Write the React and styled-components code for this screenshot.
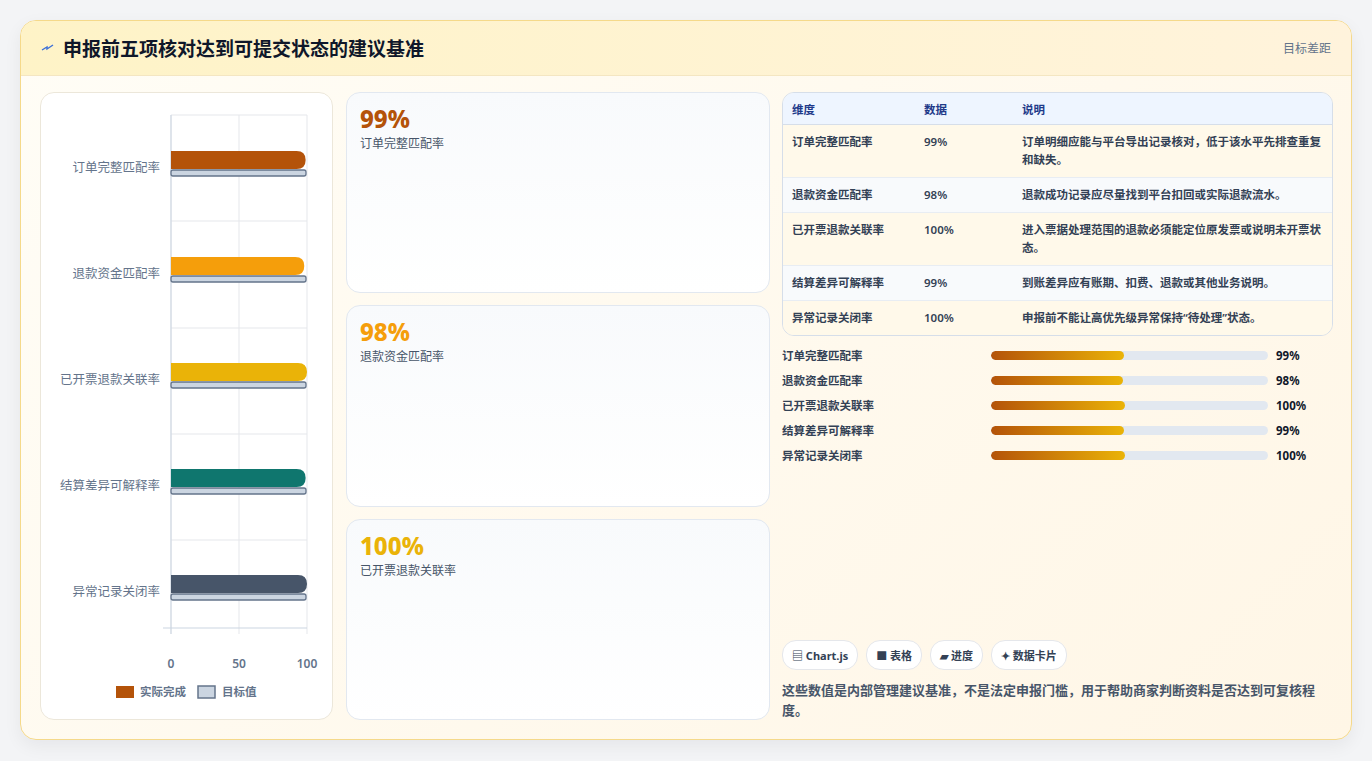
import React from 'react';
import styled, { createGlobalStyle } from 'styled-components';

const GlobalStyle = createGlobalStyle`
  html, body { margin: 0; background: #f3f4f6; }
  body { font-family: "Noto Sans", "Noto Sans CJK SC", sans-serif; }
`;

const metrics = [
  { name: '订单完整匹配率', value: 99, color: '#b45309', note: '订单明细应能与平台导出记录核对，低于该水平先排查重复和缺失。' },
  { name: '退款资金匹配率', value: 98, color: '#f59e0b', note: '退款成功记录应尽量找到平台扣回或实际退款流水。' },
  { name: '已开票退款关联率', value: 100, color: '#eab308', note: '进入票据处理范围的退款必须能定位原发票或说明未开票状态。' },
  { name: '结算差异可解释率', value: 99, color: '#0f766e', note: '到账差异应有账期、扣费、退款或其他业务说明。' },
  { name: '异常记录关闭率', value: 100, color: '#475569', note: '申报前不能让高优先级异常保持“待处理”状态。' },
];

const Page = styled.div`
  padding: 20px 20px 21px;
`;

const Panel = styled.div`
  border: 1px solid #f5d98a;
  border-radius: 16px;
  background: linear-gradient(135deg, #fffdf6, #fff6e6);
  box-shadow: 0 6px 18px rgba(15, 23, 42, 0.06);
  overflow: hidden;
`;

const Header = styled.div`
  height: 54px;
  display: flex;
  align-items: center;
  justify-content: space-between;
  padding: 0 20px;
  background: linear-gradient(90deg, #fef3c7, #fff3dc);
  border-bottom: 1px solid #f4e6c2;
`;

const Title = styled.h2`
  margin: 0;
  display: flex;
  align-items: center;
  gap: 8px;
  font-size: 19px;
  font-weight: 700;
  color: #0f172a;
`;

const Side = styled.span`
  font-size: 12px;
  color: #64748b;
`;

const Body = styled.div`
  display: grid;
  grid-template-columns: 293px 423px 1fr;
  gap: 14px;
  padding: 16px 18px 19px 19px;
  height: 628px;
`;

const Card = styled.div`
  background: #fff;
  border: 1px solid #ece7da;
  border-radius: 14px;
  overflow: hidden;
`;

const Stack = styled.div`
  display: grid;
  grid-template-rows: repeat(3, 1fr);
  gap: 12px;
  margin-left: -1px;
`;

const Stat = styled.div`
  border: 1px solid #e2e8f0;
  border-radius: 14px;
  background: linear-gradient(180deg, #f8fafc, #ffffff);
  padding: 12px 13px;
`;

const StatValue = styled.div`
  font-size: 24px;
  font-weight: 800;
  line-height: 28px;
  color: ${(p) => p.color};
`;

const StatLabel = styled.div`
  font-size: 12px;
  color: #475569;
  margin-top: 1px;
`;

const Right = styled.div`
  display: flex;
  flex-direction: column;
  margin-left: -2px;
`;

const Table = styled.table`
  width: 100%;
  border-collapse: separate;
  border-spacing: 0;
  border: 1px solid #d6dee9;
  border-radius: 12px;
  overflow: hidden;
  font-size: 11.5px;
  color: #334155;
  th {
    background: #eef5ff;
    color: #1e3a8a;
    text-align: left;
    font-weight: 700;
    height: 31px;
    padding: 0 9px;
    border-bottom: 1px solid #d6dee9;
  }
  td {
    padding: 8px 9px;
    vertical-align: top;
    line-height: 18px;
    font-weight: 600;
    border-top: 1px solid #e8edf3;
  }
  tbody tr:first-child td { border-top: none; }
  tbody tr:nth-child(odd) td { background: #fff9ea; }
  tbody tr:nth-child(even) td { background: #f8fafc; }
`;

const Progress = styled.div`
  display: flex;
  flex-direction: column;
  gap: 7px;
  margin-top: 10px;
`;

const ProgressRow = styled.div`
  display: grid;
  grid-template-columns: 201px 277px 1fr;
  align-items: center;
  gap: 0 8px;
  font-size: 11.5px;
  font-weight: 600;
  color: #334155;
  height: 18px;
  b { color: #0f172a; font-weight: 700; }
`;

const Track = styled.div`
  height: 9px;
  border-radius: 5px;
  background: #e2e8f0;
  overflow: hidden;
`;

const Fill = styled.div`
  height: 100%;
  border-radius: 5px;
  background: linear-gradient(90deg, #b45309, #eab308);
`;

const Chips = styled.div`
  margin-top: auto;
  display: flex;
  gap: 8px;
`;

const Chip = styled.span`
  height: 28px;
  padding: 0 9px;
  display: inline-flex;
  align-items: center;
  gap: 3px;
  border: 1px solid #e5e7eb;
  border-radius: 14px;
  background: #fff;
  font-size: 11px;
  font-weight: 700;
  color: #334155;
`;

const Note = styled.p`
  margin: 10px 0 0;
  font-size: 13px;
  line-height: 20px;
  font-weight: 600;
  color: #475569;
  padding-right: 12px;
`;

const Chart = () => {
  const x0 = 130;
  const w = 136;
  const centers = [74, 180, 286, 392, 498];
  return (
    <svg width="292" height="626" fontFamily='"Noto Sans", "Noto Sans CJK SC", sans-serif'>
      {[0, 50, 100].map((t) => (
        <line key={t} x1={x0 + (w * t) / 100} x2={x0 + (w * t) / 100} y1="22" y2="541" stroke="#e5e7eb" />
      ))}
      {[22, 128, 235, 341, 447].map((y) => (
        <line key={y} x1={x0} x2={x0 + w} y1={y} y2={y} stroke="#e5e7eb" />
      ))}
      <line x1={x0} x2={x0} y1="22" y2="541" stroke="#cbd5e1" />
      <line x1={x0 - 8} x2={x0 + w} y1="535" y2="535" stroke="#cbd5e1" />
      {metrics.map((m, i) => {
        const c = centers[i];
        const bw = (w * m.value) / 100;
        return (
          <g key={m.name}>
            <text x="119" y={c + 5} textAnchor="end" fontSize="12.5" fill="#64748b">{m.name}</text>
            <path d={`M${x0} ${c - 16} H${x0 + bw - 9} Q${x0 + bw} ${c - 16} ${x0 + bw} ${c - 7} Q${x0 + bw} ${c + 2} ${x0 + bw - 9} ${c + 2} H${x0} Z`} fill={m.color} />
            <rect x={x0} y={c + 3} width={w - 1} height="6" rx="2" fill="#cbd5e1" stroke="#64748b" strokeWidth="1.3" />
          </g>
        );
      })}
      {[0, 50, 100].map((t) => (
        <text key={t} x={x0 + (w * t) / 100} y="575" textAnchor="middle" fontSize="12" fontWeight="600" fill="#64748b">{t}</text>
      ))}
      <rect x="75" y="593" width="18" height="12" fill="#b45309" />
      <text x="99" y="603" fontSize="11.5" fontWeight="600" fill="#64748b">实际完成</text>
      <rect x="157" y="593" width="17" height="12" fill="#cbd5e1" stroke="#64748b" strokeWidth="1.5" />
      <text x="181" y="603" fontSize="11.5" fontWeight="600" fill="#64748b">目标值</text>
    </svg>
  );
};

export default function App() {
  return (
    <Page>
      <GlobalStyle />
      <Panel>
        <Header>
          <Title>
            <svg width="14" height="10" viewBox="0 0 14 10">
              <path d="M1 7 L6 4 L6 6 L12 2" fill="none" stroke="#3b6fd8" strokeWidth="1.4" />
            </svg>
            申报前五项核对达到可提交状态的建议基准
          </Title>
          <Side>目标差距</Side>
        </Header>
        <Body>
          <Card><Chart /></Card>
          <Stack>
            {metrics.slice(0, 3).map((m) => (
              <Stat key={m.name}>
                <StatValue color={m.color}>{m.value}%</StatValue>
                <StatLabel>{m.name}</StatLabel>
              </Stat>
            ))}
          </Stack>
          <Right>
            <Table>
              <colgroup>
                <col style={{ width: 132 }} />
                <col style={{ width: 98 }} />
                <col />
              </colgroup>
              <thead>
                <tr><th>维度</th><th>数据</th><th>说明</th></tr>
              </thead>
              <tbody>
                {metrics.map((m) => (
                  <tr key={m.name}><td>{m.name}</td><td>{m.value}%</td><td>{m.note}</td></tr>
                ))}
              </tbody>
            </Table>
            <Progress>
              {metrics.map((m) => (
                <ProgressRow key={m.name}>
                  <span>{m.name}</span>
                  <Track><Fill style={{ width: `${m.value * 0.485}%` }} /></Track>
                  <b>{m.value}%</b>
                </ProgressRow>
              ))}
            </Progress>
            <Chips>
              <Chip>▤ Chart.js</Chip>
              <Chip>■ 表格</Chip>
              <Chip>▰ 进度</Chip>
              <Chip>✦ 数据卡片</Chip>
            </Chips>
            <Note>这些数值是内部管理建议基准，不是法定申报门槛，用于帮助商家判断资料是否达到可复核程度。</Note>
          </Right>
        </Body>
      </Panel>
    </Page>
  );
}
